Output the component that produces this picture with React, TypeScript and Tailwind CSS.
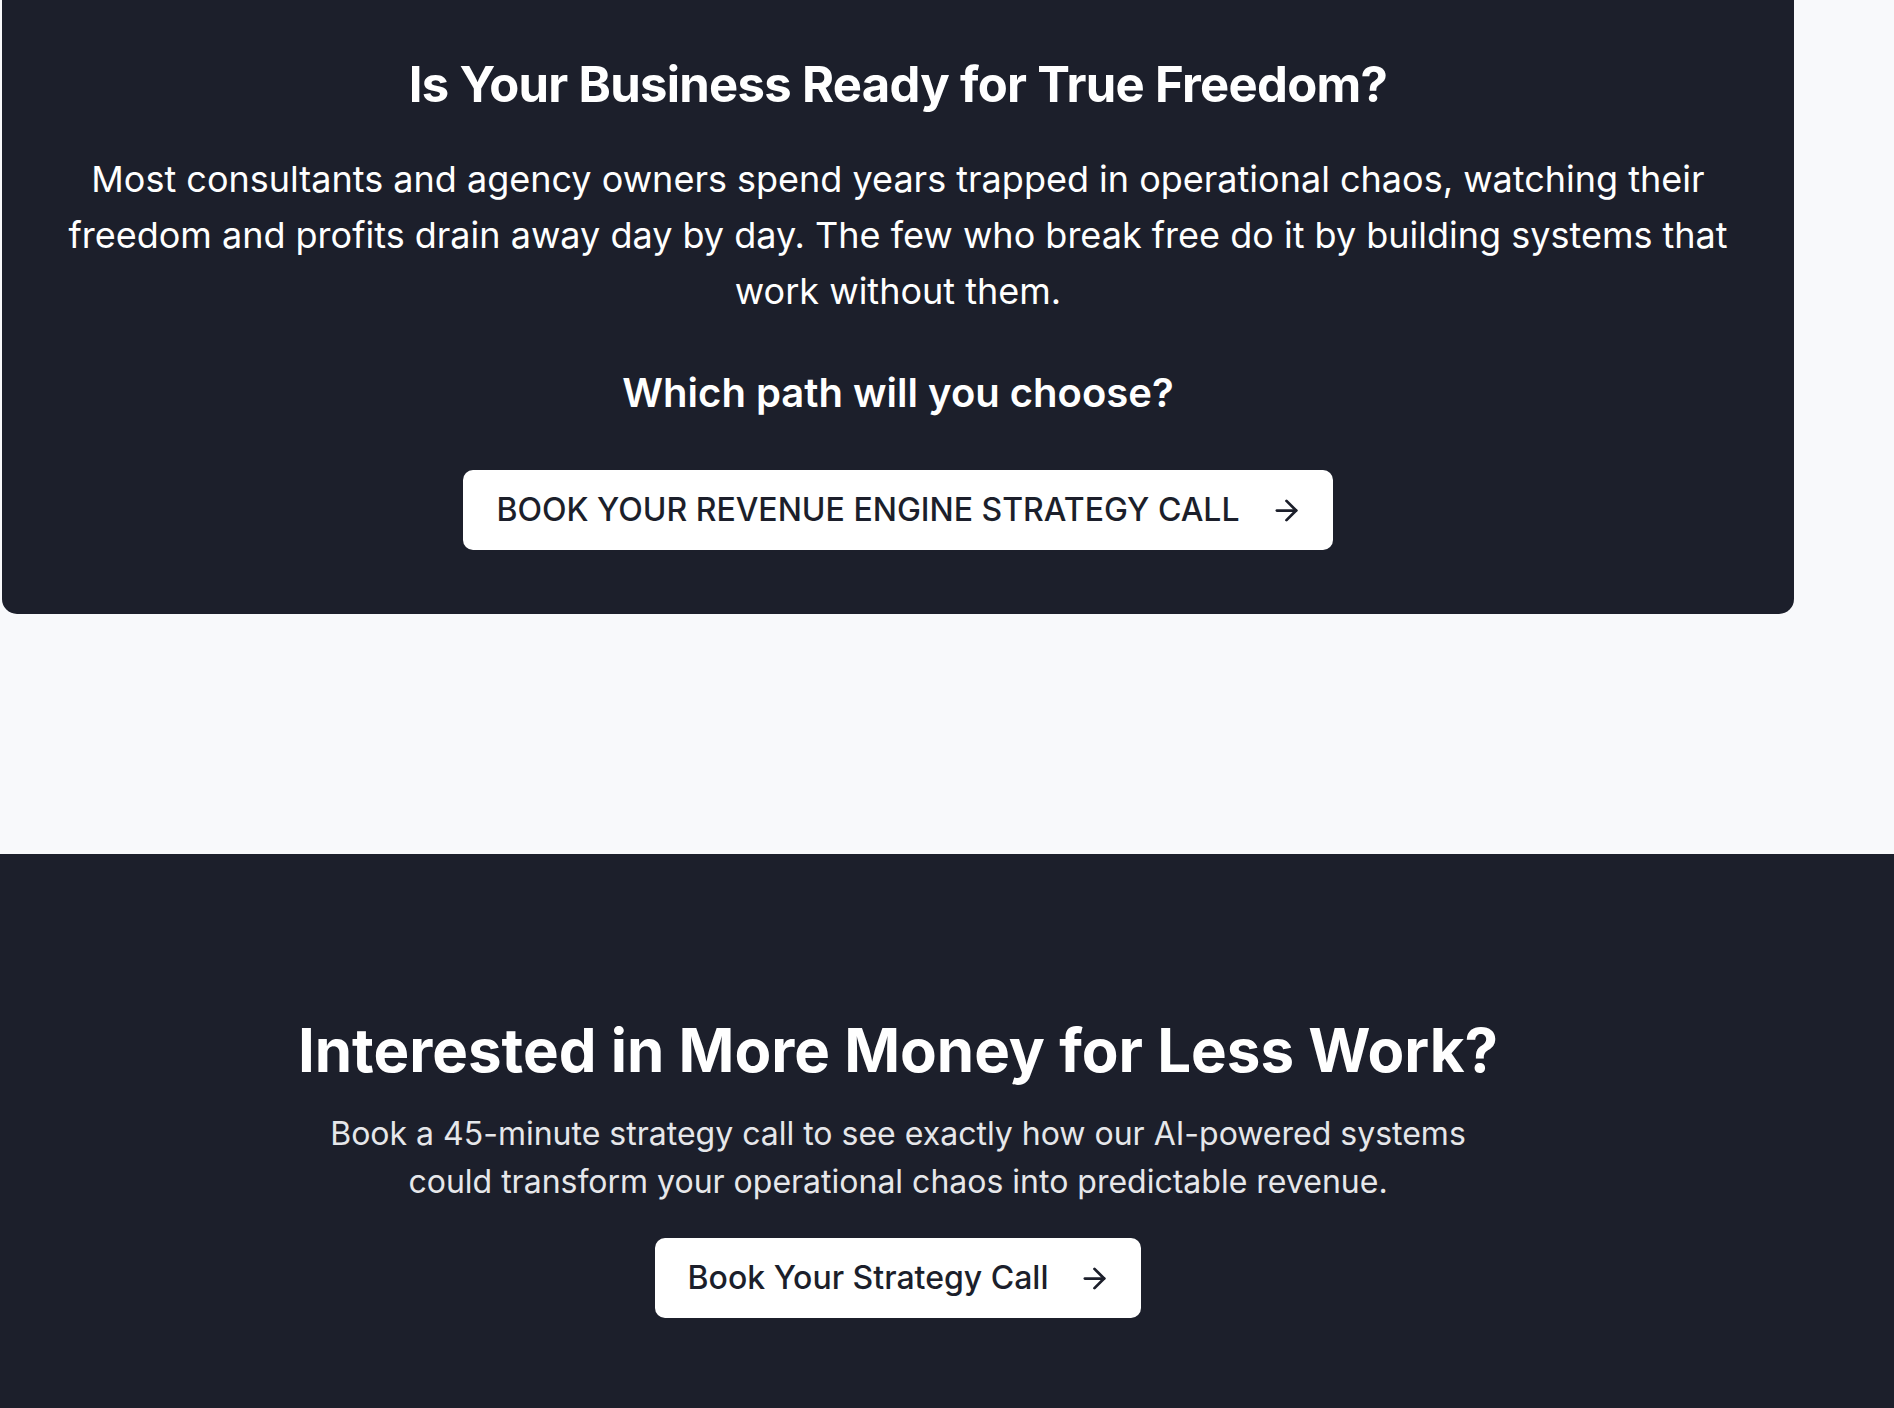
import React from "react";
import { ArrowRight } from "lucide-react";

export default function App() {
  return (
    <div
      className="w-full min-h-screen bg-[#f8f9fb] text-white"
      style={{ fontFamily: "Inter, 'Noto Sans', sans-serif" }}
    >
      <section className="ml-[2px] w-[1792px] bg-[#1c1f2b] rounded-b-[15px] pt-[55px] pb-[64px] flex flex-col items-center text-center">
        <h2 className="text-[49px] font-bold leading-[60px] tracking-[-0.7px]">
          Is Your Business Ready for True Freedom?
        </h2>
        <p className="mt-[36px] text-[36px] leading-[56px] text-white">
          Most consultants and agency owners spend years trapped in operational chaos, watching their
          <br />
          freedom and profits drain away day by day. The few who break free do it by building systems that
          <br />
          work without them.
        </p>
        <h3 className="mt-[50px] text-[40px] font-semibold leading-[48px]">
          Which path will you choose?
        </h3>
        <button className="mt-[53px] h-[80px] flex items-center gap-[30px] pl-[33px] pr-[30px] bg-white rounded-[10px] text-[#1c1f2b] text-[32px] font-medium">
          <span>BOOK YOUR REVENUE ENGINE STRATEGY CALL</span>
          <ArrowRight size={33} strokeWidth={2} />
        </button>
      </section>

      <div className="h-[240px]" />

      <section className="bg-[#1c1f2b] pt-[160px] pb-[160px]">
        <div className="ml-[2px] w-[1792px] flex flex-col items-center text-center">
          <h2 className="text-[60px] font-bold leading-[72px]">
            Interested in More Money for Less Work?
          </h2>
          <p className="mt-[24px] text-[32px] leading-[48px] text-[#e6e7ea]">
            Book a 45-minute strategy call to see exactly how our AI-powered systems
            <br />
            could transform your operational chaos into predictable revenue.
          </p>
          <button className="mt-[32px] h-[80px] flex items-center gap-[30px] pl-[33px] pr-[30px] bg-white rounded-[10px] text-[#1c1f2b] text-[32px] font-medium">
            <span>Book Your Strategy Call</span>
            <ArrowRight size={33} strokeWidth={2} />
          </button>
        </div>
      </section>
    </div>
  );
}
